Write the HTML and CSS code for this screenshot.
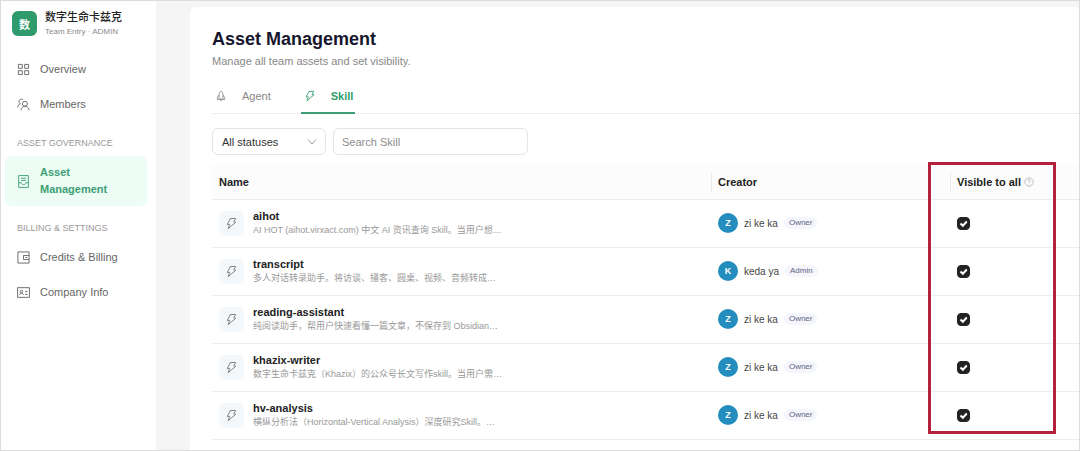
FILE: index.html
```html
<!DOCTYPE html>
<html lang="en">
<head>
<meta charset="UTF-8">
<meta name="viewport" content="width=device-width, initial-scale=1.0">
<title>Asset Management</title>
<link rel="stylesheet" href="styles.css">
</head>
<body>
  <svg class="sprite" aria-hidden="true">
    <symbol id="bolt" viewBox="0 0 14 14">
      <path d="M5.800 1.800L11.400 1.500 9.400 5.200 11.600 5.700 3.400 12.600 5 8H2.500z"/>
    </symbol>
  </svg>
  <div class="app">
    <aside class="sidebar">
      <div class="team">
        <span class="team-logo">数</span>
        <div>
          <div class="team-name">数字生命卡兹克</div>
          <div class="team-role">Team Entry · ADMIN</div>
        </div>
      </div>
      <nav class="nav">
        <a class="nav-item" href="#">
          <svg class="icon" viewBox="0 0 14 14"><path d="M1.500 1.500h4.200v4.200H1.500zM8.300 1.500h4.200v4.200H8.300zM1.500 8.300h4.200v4.200H1.500zM8.300 8.300h4.200v4.200H8.300z"/></svg>
          Overview
        </a>
        <a class="nav-item" href="#">
          <svg class="icon" viewBox="0 0 14 14"><circle cx="8.500" cy="6.200" r="2.700"/><path d="M4.300 13.200c.1-2.400 1.600-4.300 4.200-4.300s4.300 1.900 4.500 4.300M6.400 2.100C5.300.7 2.200 1 2.200 3.700c0 1.200.5 1.900 1.300 2.500C1.900 6.900 1 8.300.8 10.200"/></svg>
          Members
        </a>
        <h2 class="nav-label">ASSET GOVERNANCE</h2>
        <a class="nav-item active" href="#">
          <svg class="icon" viewBox="0 0 14 14"><path d="M1.800.6h10.400v12.800H1.800zM4.300 3.500h5.400M4.300 5.800h5.400M1.800 8.300h2.700c.3 1.400 1.300 2.100 2.500 2.100s2.200-.7 2.500-2.100h2.700"/></svg>
          Asset Management
        </a>
        <h2 class="nav-label">BILLING &amp; SETTINGS</h2>
        <a class="nav-item" href="#">
          <svg class="icon" viewBox="0 0 14 14"><path d="M1 1h12v12H1zM13 4.800H7v4.400h6M9 7h2"/></svg>
          Credits &amp; Billing
        </a>
        <a class="nav-item" href="#">
          <svg class="icon" viewBox="0 0 14 14"><path d="M.6 1.800h12.800v10.400H.6zM2.800 9.700c.2-1.300.8-2 2-2s1.800.7 2 2M8.600 6h2.700M8.600 9h2.700"/><circle cx="4.800" cy="5.900" r="1.400"/></svg>
          Company Info
        </a>
      </nav>
    </aside>

    <main class="content">
      <h1>Asset Management</h1>
      <p class="subtitle">Manage all team assets and set visibility.</p>

      <div class="tabs" role="tablist">
        <button class="tab" role="tab" aria-selected="false">
          <svg class="tab-icon" viewBox="0 0 14 14"><path d="M7 1C5.300 2.400 4.700 4 4.700 6L2.800 8.600v2.600h8.400V8.600L9.300 6C9.300 4 8.700 2.400 7 1zM4.700 6v5.200M9.300 6v5.200M7 9.200v4"/></svg>
          Agent
        </button>
        <button class="tab active" role="tab" aria-selected="true">
          <svg class="tab-icon"><use href="#bolt"/></svg>
          Skill
        </button>
      </div>

      <div class="filters">
        <select class="status" aria-label="Status">
          <option>All statuses</option>
        </select>
        <input class="search" type="text" placeholder="Search Skill" aria-label="Search Skill">
      </div>

      <div class="table-wrap">
        <table class="assets">
          <colgroup>
            <col>
            <col class="col-creator">
            <col class="col-visible">
          </colgroup>
          <thead>
            <tr>
              <th>Name</th>
              <th><span class="divided">Creator</span></th>
              <th>
                <span class="divided">Visible to all
                  <svg class="help" viewBox="0 0 12 12"><circle cx="6" cy="6" r="5"/><path d="M4.500 4.800c0-2 3-2 3-.2 0 1.200-1.500 1.200-1.500 2.400M6 8.200v.9"/></svg>
                </span>
              </th>
            </tr>
          </thead>
          <tbody>
            <tr>
              <td>
                <div class="asset">
                  <span class="asset-icon"><svg><use href="#bolt"/></svg></span>
                  <div>
                    <div class="asset-name">aihot</div>
                    <div class="asset-desc">AI HOT (aihot.virxact.com) 中文 AI 资讯查询 Skill。当用户想…</div>
                  </div>
                </div>
              </td>
              <td><div class="creator"><span class="avatar">Z</span>zi ke ka<span class="role">Owner</span></div></td>
              <td><input class="check" type="checkbox" aria-label="aihot visible to all" checked></td>
            </tr>
            <tr>
              <td>
                <div class="asset">
                  <span class="asset-icon"><svg><use href="#bolt"/></svg></span>
                  <div>
                    <div class="asset-name">transcript</div>
                    <div class="asset-desc">多人对话转录助手。将访谈、播客、圆桌、视频、音频转成…</div>
                  </div>
                </div>
              </td>
              <td><div class="creator"><span class="avatar">K</span>keda ya<span class="role">Admin</span></div></td>
              <td><input class="check" type="checkbox" aria-label="transcript visible to all" checked></td>
            </tr>
            <tr>
              <td>
                <div class="asset">
                  <span class="asset-icon"><svg><use href="#bolt"/></svg></span>
                  <div>
                    <div class="asset-name">reading-assistant</div>
                    <div class="asset-desc">纯阅读助手，帮用户快速看懂一篇文章，不保存到 Obsidian…</div>
                  </div>
                </div>
              </td>
              <td><div class="creator"><span class="avatar">Z</span>zi ke ka<span class="role">Owner</span></div></td>
              <td><input class="check" type="checkbox" aria-label="reading-assistant visible to all" checked></td>
            </tr>
            <tr>
              <td>
                <div class="asset">
                  <span class="asset-icon"><svg><use href="#bolt"/></svg></span>
                  <div>
                    <div class="asset-name">khazix-writer</div>
                    <div class="asset-desc">数字生命卡兹克（Khazix）的公众号长文写作skill。当用户需…</div>
                  </div>
                </div>
              </td>
              <td><div class="creator"><span class="avatar">Z</span>zi ke ka<span class="role">Owner</span></div></td>
              <td><input class="check" type="checkbox" aria-label="khazix-writer visible to all" checked></td>
            </tr>
            <tr>
              <td>
                <div class="asset">
                  <span class="asset-icon"><svg><use href="#bolt"/></svg></span>
                  <div>
                    <div class="asset-name">hv-analysis</div>
                    <div class="asset-desc">横纵分析法（Horizontal-Vertical Analysis）深度研究Skill。…</div>
                  </div>
                </div>
              </td>
              <td><div class="creator"><span class="avatar">Z</span>zi ke ka<span class="role">Owner</span></div></td>
              <td><input class="check" type="checkbox" aria-label="hv-analysis visible to all" checked></td>
            </tr>
          </tbody>
        </table>
        <div class="highlight"></div>
      </div>
    </main>
  </div>
</body>
</html>
```
FILE: styles.css
```css
* {
  box-sizing: border-box;
}
body {
  margin: 0;
  font-family: "Liberation Sans", "Noto Sans CJK SC", Arial, sans-serif;
  font-size: 11px;
  color: #222;
}
button, input, select {
  font-family: inherit;
}
svg {
  fill: none;
  stroke: currentColor;
}
.sprite {
  display: none;
}
.app {
  display: flex;
  gap: 34px;
  min-height: 100vh;
  background: #f5f5f5;
  border: 1px solid #dcdcdc;
}

/* sidebar */
.sidebar {
  width: 155px;
  flex-shrink: 0;
  background: #fff;
}
.team {
  display: flex;
  align-items: center;
  gap: 8px;
  padding: 8px 11px;
}
.team-logo {
  display: flex;
  align-items: center;
  justify-content: center;
  width: 25px;
  height: 25px;
  border-radius: 6px;
  background: #2f9a6b;
  color: #fff;
  font-size: 11px;
  font-weight: bold;
}
.team-name {
  font-size: 11px;
  line-height: 16px;
  font-weight: 500;
  color: #222;
}
.team-role {
  font-size: 8px;
  line-height: 13px;
  color: #8a8a8a;
}
.nav {
  display: flex;
  flex-direction: column;
  gap: 2px;
  padding: 7px 9px 8px 4px;
}
.nav-item {
  display: flex;
  align-items: center;
  gap: 10px;
  padding: 8px 12px;
  border-radius: 6px;
  font-size: 11px;
  line-height: 17px;
  color: #666;
  text-decoration: none;
}
.nav-item.active {
  background: #edfcf4;
  color: #3d9f75;
  font-weight: bold;
}
.icon {
  width: 13px;
  height: 13px;
  flex-shrink: 0;
}
.nav-label {
  margin: 0;
  padding: 12px 12px 3px;
  font-size: 9px;
  line-height: 16px;
  font-weight: normal;
  color: #999;
}

/* main panel */
.content {
  flex: 1;
  min-width: 0;
  margin-top: 6px;
  padding: 20px 0 10px 22px;
  background: #fff;
  border-top-left-radius: 6px;
}
h1 {
  margin: 0;
  font-size: 18px;
  line-height: 24px;
  color: #16162e;
}
.subtitle {
  margin: 2px 0 0;
  font-size: 11px;
  line-height: 16px;
  color: #888;
}
.tabs {
  display: flex;
  gap: 28px;
  margin-top: 10px;
  border-bottom: 1px solid #ebebeb;
}
.tab {
  display: flex;
  align-items: center;
  gap: 15px;
  height: 35px;
  margin-bottom: -1px;
  padding: 0 2px 0 3px;
  border: none;
  border-bottom: 2px solid transparent;
  background: none;
  font-size: 11px;
  color: #888;
}
.tab.active {
  border-bottom-color: #3d9f75;
  color: #2f9e6b;
  font-weight: bold;
}
.tab-icon {
  width: 12px;
  height: 12px;
}
.filters {
  display: flex;
  gap: 7px;
  padding: 14px 0 10px;
}
.status, .search {
  height: 27px;
  border: 1px solid #e4e4e4;
  border-radius: 6px;
  background-color: #fff;
  font-size: 11px;
}
.status {
  width: 114px;
  padding: 0 9px;
  appearance: none;
  color: #333;
  background-image: url("data:image/svg+xml,%3Csvg xmlns='http://www.w3.org/2000/svg' width='10' height='6' fill='none' stroke='%23999'%3E%3Cpath d='M1 .5l4 4.500 4-4.500'/%3E%3C/svg%3E");
  background-repeat: no-repeat;
  background-position: right 8px center;
}
.search {
  width: 195px;
  padding: 0 8px;
}
.search::placeholder {
  color: #8c8c8c;
}

/* table */
.table-wrap {
  position: relative;
}
.assets {
  width: 100%;
  border-collapse: collapse;
  table-layout: fixed;
}
.col-creator {
  width: 239px;
}
.col-visible {
  width: 129px;
}
th {
  height: 34px;
  padding: 0 0 0 7px;
  border-bottom: 1px solid #ececec;
  background: #fcfcfc;
  text-align: left;
  font-size: 11px;
}
.divided {
  display: flex;
  align-items: center;
  gap: 3px;
  height: 20px;
  margin-left: -7px;
  padding-left: 6px;
  border-left: 1px solid #ebebeb;
}
.help {
  width: 10px;
  height: 10px;
  color: #b5b5b5;
}
td {
  height: 48px;
  padding: 0 0 0 7px;
  border-bottom: 1px solid #ececec;
}
.asset {
  display: flex;
  align-items: center;
  gap: 9px;
}
.asset-icon {
  display: flex;
  align-items: center;
  justify-content: center;
  width: 25px;
  height: 25px;
  border-radius: 5px;
  background: #f5f8fb;
  color: #777;
}
.asset-icon svg {
  width: 13px;
  height: 13px;
}
.asset-name {
  font-size: 11px;
  line-height: 14px;
  font-weight: bold;
}
.asset-desc {
  font-size: 9px;
  line-height: 14px;
  color: #999;
  white-space: nowrap;
}
.creator {
  display: flex;
  align-items: center;
  gap: 6px;
  font-size: 10px;
  color: #444;
}
.avatar {
  display: flex;
  align-items: center;
  justify-content: center;
  width: 20px;
  height: 20px;
  border-radius: 50%;
  background: #258dbd;
  color: #fff;
  font-size: 9px;
  font-weight: bold;
}
.role {
  padding: 0 5px;
  border-radius: 6px;
  background: #f5f6fc;
  color: #5d6385;
  font-size: 8px;
  line-height: 12px;
}
.check {
  display: block;
  width: 13px;
  height: 13px;
  margin: 0;
  appearance: none;
  border: 1px solid #222;
  border-radius: 4px;
}
.check:checked {
  background: #222 url("data:image/svg+xml,%3Csvg xmlns='http://www.w3.org/2000/svg' width='11' height='11' fill='none' stroke='white' stroke-width='2'%3E%3Cpath d='M2.500 5.500l2.300 2.300 4-4.300'/%3E%3C/svg%3E") center no-repeat;
}
/* frame around the visibility column */
.highlight {
  position: absolute;
  top: -3px;
  right: 23px;
  bottom: 6px;
  width: 128px;
  border: 3px solid #b5203c;
  pointer-events: none;
}
```
